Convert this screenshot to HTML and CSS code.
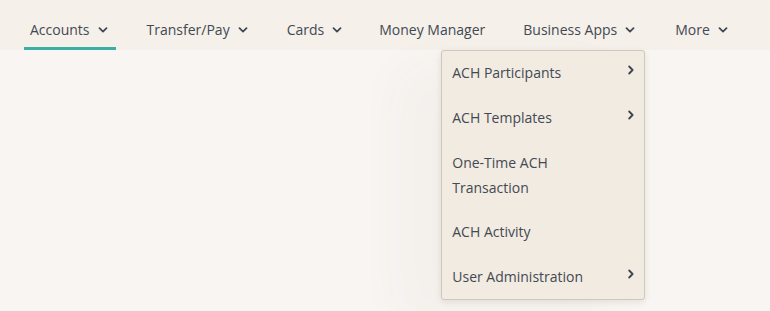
FILE: index.html
```html
<!DOCTYPE html>
<html lang="en">
<head>
<meta charset="utf-8">
<title>Navigation</title>
<link rel="stylesheet" href="styles.css">
</head>
<body>
<nav class="nav">
  <ul class="nav-list">
    <li class="nav-item active"><span class="nav-label">Accounts</span><svg class="caret" viewBox="0 0 10 6" width="10" height="6"><path d="M1.5 1.2 L5 4.6 L8.5 1.2" /></svg></li>
    <li class="nav-item"><span class="nav-label">Transfer/Pay</span><svg class="caret" viewBox="0 0 10 6" width="10" height="6"><path d="M1.5 1.2 L5 4.6 L8.5 1.2" /></svg></li>
    <li class="nav-item"><span class="nav-label">Cards</span><svg class="caret" viewBox="0 0 10 6" width="10" height="6"><path d="M1.5 1.2 L5 4.6 L8.5 1.2" /></svg></li>
    <li class="nav-item tight"><span class="nav-label">Money Manager</span></li>
    <li class="nav-item open wide"><span class="nav-label">Business Apps</span><svg class="caret" viewBox="0 0 10 6" width="10" height="6"><path d="M1.5 1.2 L5 4.6 L8.5 1.2" /></svg>
      <ul class="dropdown">
        <li class="dd-item"><span>ACH Participants</span><svg class="sub" viewBox="0 0 6 10" width="6" height="10"><path d="M1.2 1.5 L4.6 5 L1.2 8.5" /></svg></li>
        <li class="dd-item"><span>ACH Templates</span><svg class="sub" viewBox="0 0 6 10" width="6" height="10"><path d="M1.2 1.5 L4.6 5 L1.2 8.5" /></svg></li>
        <li class="dd-item"><span>One-Time ACH<br>Transaction</span></li>
        <li class="dd-item"><span>ACH Activity</span></li>
        <li class="dd-item"><span>User Administration</span><svg class="sub" viewBox="0 0 6 10" width="6" height="10"><path d="M1.2 1.5 L4.6 5 L1.2 8.5" /></svg></li>
      </ul>
    </li>
    <li class="nav-item wide"><span class="nav-label">More</span><svg class="caret" viewBox="0 0 10 6" width="10" height="6"><path d="M1.5 1.2 L5 4.6 L8.5 1.2" /></svg></li>
  </ul>
</nav>
<main class="page"></main>
</body>
</html>
```
FILE: styles.css
```css
* { box-sizing: border-box; }
html, body { margin: 0; padding: 0; }
body {
  background: #f8f5f2;
  font-family: "Open Sans", "Liberation Sans", sans-serif;
  color: #434952;
  width: 770px;
  height: 311px;
  overflow: hidden;
}
.nav {
  background: #f5f0ea;
  height: 50px;
}
.nav-list {
  list-style: none;
  margin: 0;
  padding: 0 0 0 24px;
  display: flex;
  gap: 25px;
  height: 50px;
}
.nav-item {
  position: relative;
  display: flex;
  align-items: center;
  height: 50px;
  padding: 13px 6px 3px 6px;
  font-size: 14px;
  line-height: 20px;
  white-space: nowrap;
}
.nav-item.tight {
  margin-left: -2px;
}
.nav-item.wide {
  margin-left: 1px;
}
.nav-item.active {
  border-bottom: 3px solid #3aafa6;
  padding-bottom: 0;
}
.caret {
  margin-left: 8px;
  margin-right: 2px;
  fill: none;
  stroke: #434952;
  stroke-width: 1.8;
  stroke-linecap: round;
  stroke-linejoin: round;
}
.dropdown {
  position: absolute;
  top: 50px;
  left: -76px;
  width: 204px;
  list-style: none;
  margin: 0;
  padding: 0;
  background: #f2ebe2;
  border: 1px solid #cdc8c2;
  border-radius: 3px;
  box-shadow: 0 2px 6px rgba(90, 70, 50, 0.12), -40px 20px 50px rgba(120, 100, 80, 0.04);
  z-index: 5;
}
.dd-item {
  display: flex;
  justify-content: space-between;
  align-items: flex-start;
  padding: 9px 10px 11px 10px;
  font-size: 14px;
  line-height: 25px;
  white-space: nowrap;
}
.dd-item:nth-child(3) {
  padding-bottom: 10px;
}
.dd-item:last-child {
  padding-bottom: 10px;
}
.sub {
  margin-top: 5px;
  fill: none;
  stroke: #3e4550;
  stroke-width: 1.8;
  stroke-linecap: round;
  stroke-linejoin: round;
}
.page {
  height: 261px;
}
```
